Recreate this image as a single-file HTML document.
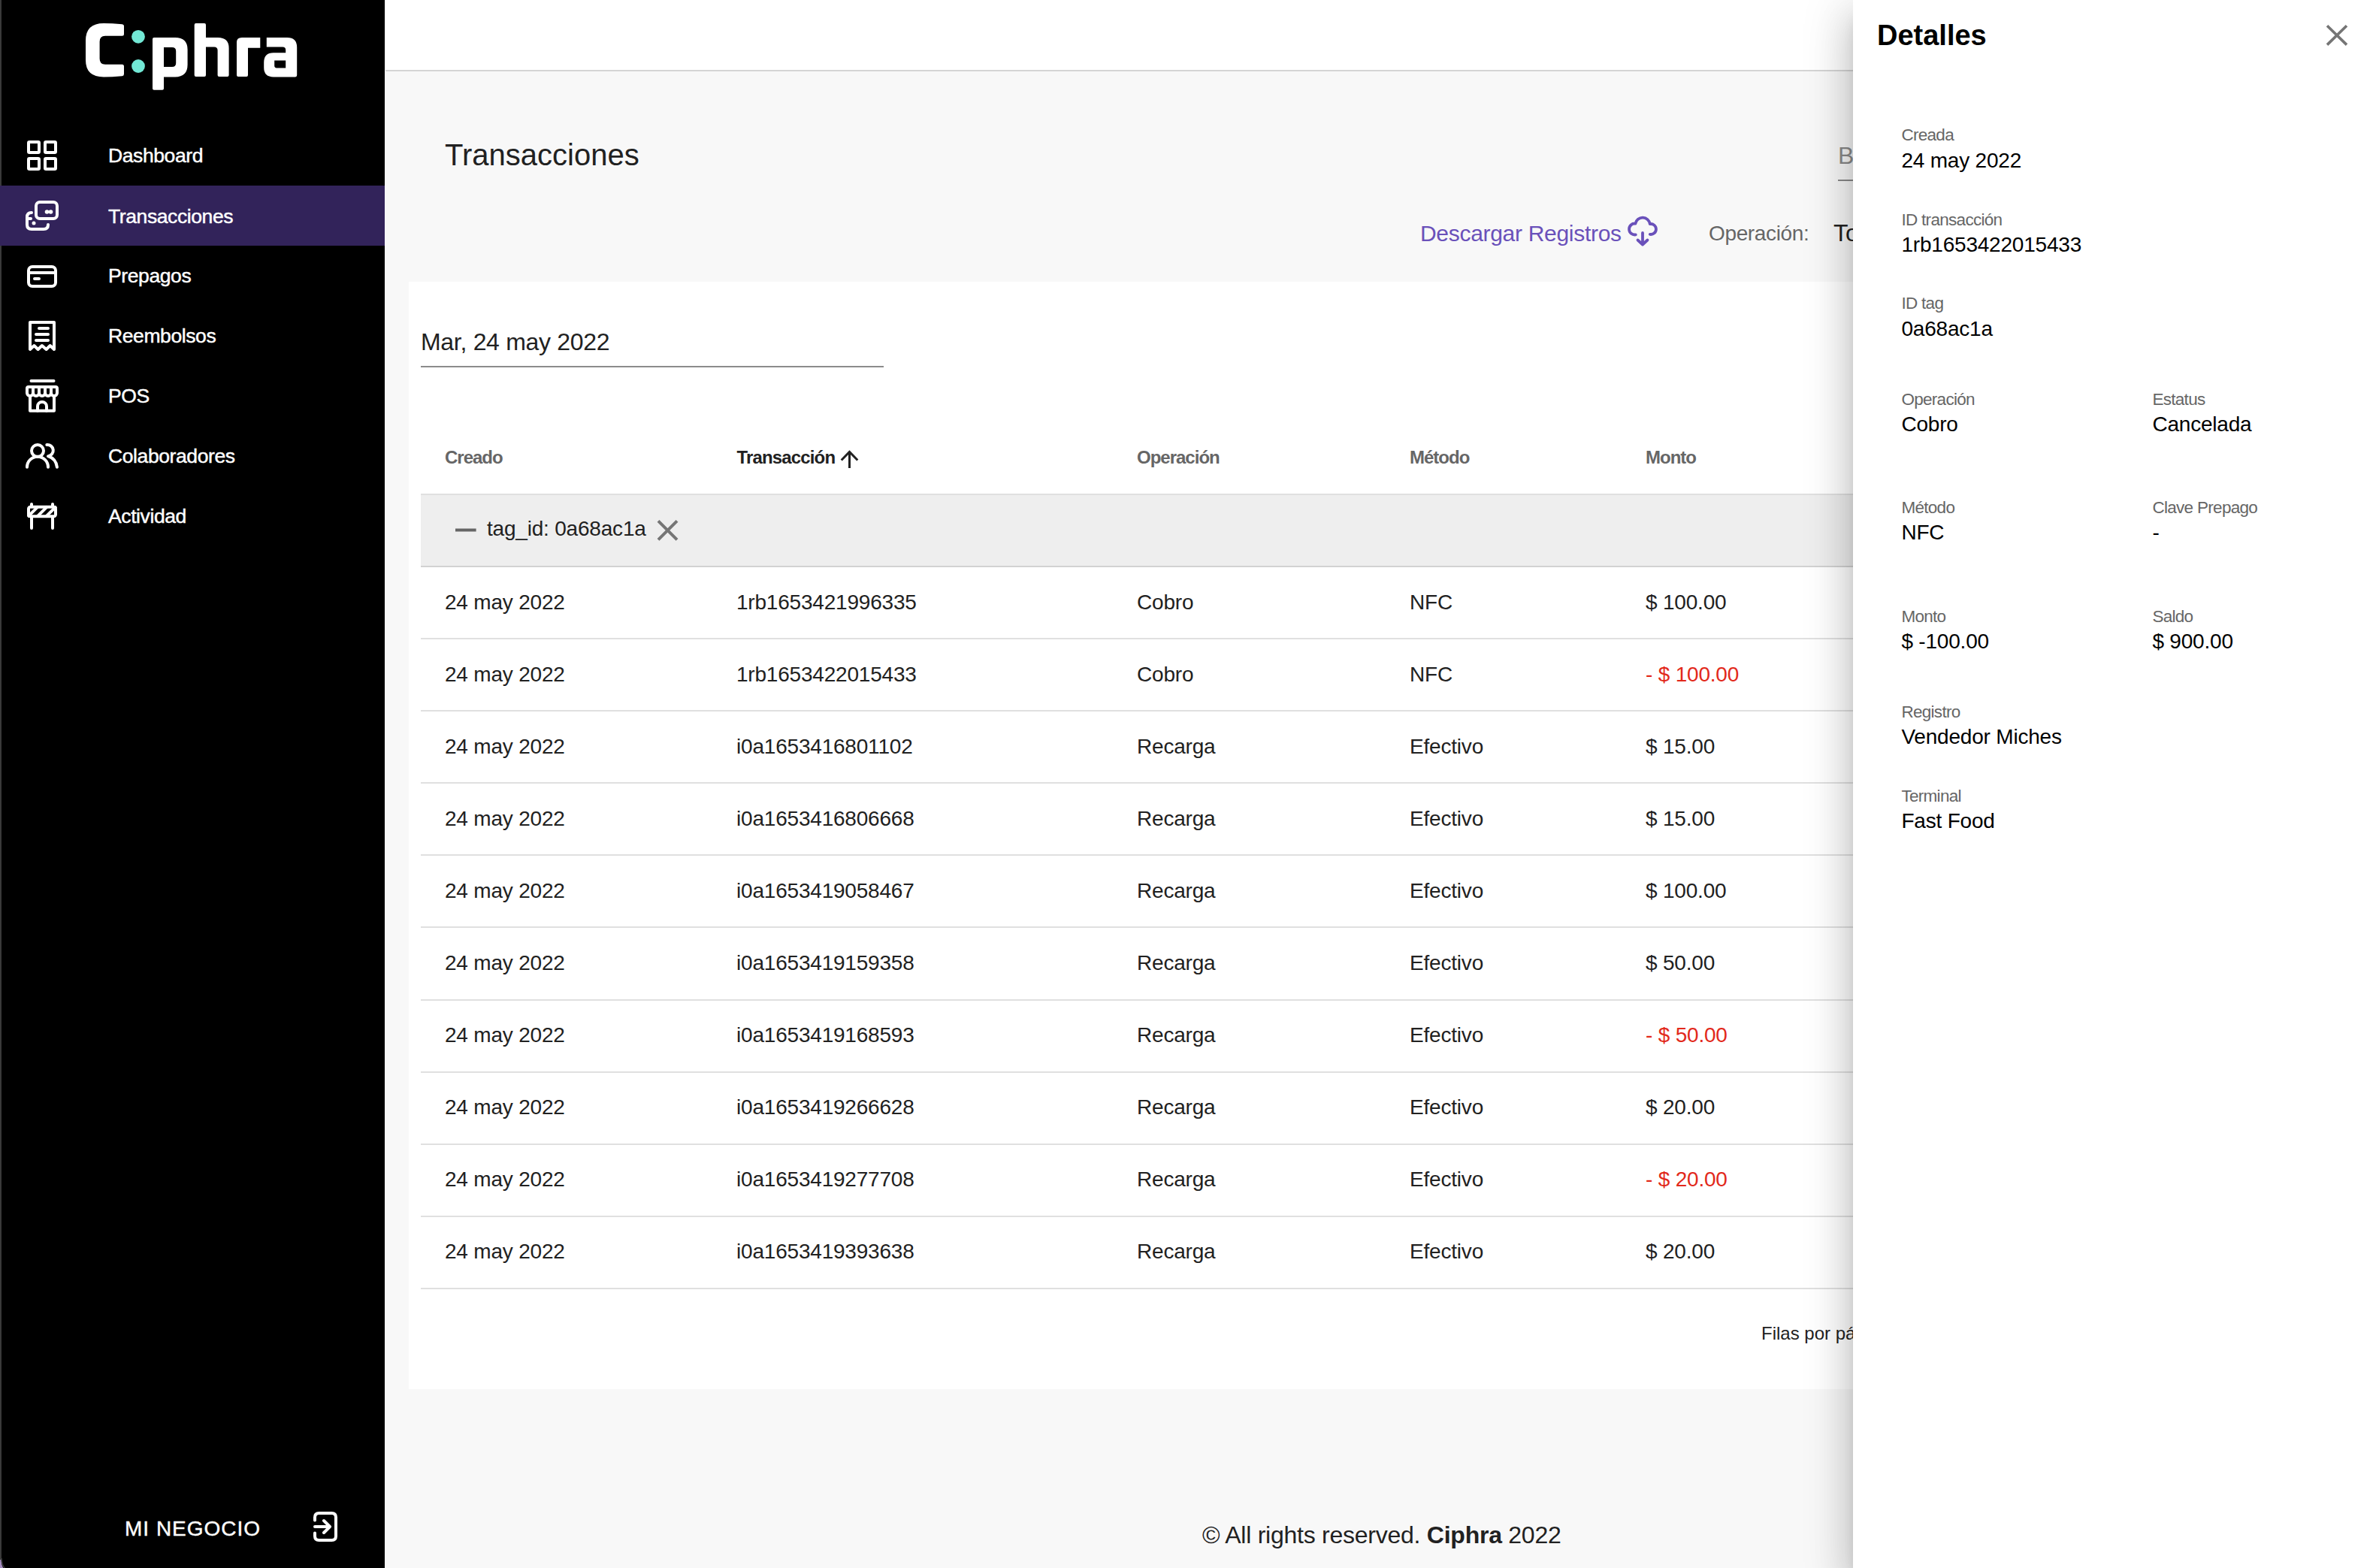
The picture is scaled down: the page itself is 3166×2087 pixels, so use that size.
<!DOCTYPE html>
<html><head><meta charset="utf-8">
<style>
html,body{margin:0;padding:0;}
body{width:3166px;height:2087px;overflow:hidden;position:relative;background:#f8f8f8;font-family:"Liberation Sans",sans-serif;color:#212121;}
.t{position:absolute;white-space:nowrap;line-height:40px;height:40px;}
#side{position:absolute;left:0;top:0;width:512px;height:2087px;background:#000;}
#side .edge{position:absolute;left:0;top:0;width:2px;height:2087px;background:#3a3a3a;}
.nav{position:absolute;left:0;width:512px;height:80px;}
.nav.sel{background:#32235a;}
.nav .lbl{position:absolute;left:144px;top:21px;line-height:40px;color:#fff;font-size:26.5px;letter-spacing:-0.4px;-webkit-text-stroke:0.45px #fff;}
.nav svg{position:absolute;left:0;top:0;}
#hdr{position:absolute;left:512px;top:0;width:2654px;height:93px;background:#fff;border-bottom:2px solid #d5d5d5;}
#card{position:absolute;left:544px;top:375px;width:2590px;height:1474px;background:#fff;}
.hline{position:absolute;left:560px;width:2558px;height:2px;background:#e0e0e0;}
.th{font-size:24px;font-weight:700;color:#666;letter-spacing:-1px;}
.td{font-size:28px;color:#212121;letter-spacing:-0.2px;}
.neg{color:#e2291b;}
#drawer{position:absolute;left:2466px;top:0;width:700px;height:2087px;background:#fff;box-shadow:0 16px 20px -10px rgba(0,0,0,.2),0 32px 48px 4px rgba(0,0,0,.14),0 12px 60px 10px rgba(0,0,0,.12);}
.lab{font-size:22.5px;color:#666;letter-spacing:-0.7px;}
.val{font-size:28px;color:#000;letter-spacing:-0.2px;}
</style></head><body>

<div id="hdr"></div>
<div style="position:absolute;left:512px;top:0;width:1px;height:2087px;background:#fff"></div>
<div id="card"></div>

<div id="side">
  <div class="edge"></div>
<svg style="position:absolute;left:0;top:2067px" width="20" height="20" viewBox="0 0 20 20"><path d="M0,9 L1.5,9 Q2,17 4.5,20 L0,20 Z" fill="#a48cbf"/><path d="M2,7 Q2.5,17 6.5,20" stroke="#3a3a3a" stroke-width="1.5" fill="none"/></svg>

  <div class="nav" style="top:166px"><div class="lbl">Dashboard</div></div>
  <div class="nav sel" style="top:247px"><div class="lbl">Transacciones</div></div>
  <div class="nav" style="top:326px"><div class="lbl">Prepagos</div></div>
  <div class="nav" style="top:406px"><div class="lbl">Reembolsos</div></div>
  <div class="nav" style="top:486px"><div class="lbl">POS</div></div>
  <div class="nav" style="top:566px"><div class="lbl">Colaboradores</div></div>
  <div class="nav" style="top:646px"><div class="lbl">Actividad</div></div>
  <svg style="position:absolute;left:0;top:0" width="512" height="2087" viewBox="0 0 512 2087">
<g fill="#fff" fill-rule="evenodd">
<path d="M162.5,32.2 Q149,31 138,31 Q114,31 114,54 L114,80 Q114,102.4 138,102.4 Q149,102.4 162.5,101.2 Q165,101 165,98.5 L165,88.3 Q165,85.8 162.5,85.8 L140,85.8 Q132.6,85.8 132.6,78 L132.6,55.5 Q132.6,47.8 140,47.8 L162.5,47.8 Q165,47.8 165,45.3 L165,34.5 Q165,32.4 162.5,32.2 Z"/>
<path d="M203,52 Q203,50 205,50 L233,50 Q249.6,50 249.6,66 L249.6,86 Q249.6,102.4 233,102.4 L218,102.4 L218,117.7 Q218,119.7 216,119.7 L205,119.7 Q203,119.7 203,117.7 Z M218,63 L229,63 Q234.2,63 234.2,68 L234.2,84 Q234.2,89 229,89 L218,89 Z"/>
<path d="M258.7,33 Q258.7,31 260.7,31 L272,31 Q274,31 274,33 L274,50 L290,50 Q304.6,50 304.6,64 L304.6,100 Q304.6,102.1 302.6,102.1 L291.6,102.1 Q289.6,102.1 289.6,100 L289.6,67 Q289.6,62.4 285,62.4 L274,62.4 L274,100 Q274,102.1 272,102.1 L260.7,102.1 Q258.7,102.1 258.7,100 Z"/>
<path d="M315,56 Q315,50 322,50 L346.3,50 L346.3,63.7 L330,63.7 L330,100 Q330,102.1 328,102.1 L317,102.1 Q315,102.1 315,100 Z"/>
<path d="M354.8,50 L382,50 Q395.2,50 395.2,63 L395.2,100 Q395.2,102.4 393,102.4 L364,102.4 Q351.2,102.4 351.2,90 L351.2,83 Q351.2,70.2 364,70.2 L380.2,70.2 L380.2,66.5 Q380.2,62.5 376,62.5 L354.8,62.5 Z M365.2,80.6 L380.2,80.6 L380.2,90.4 L368,90.4 Q365.2,90.4 365.2,87.6 Z"/>
</g>
<circle cx="184" cy="48.8" r="8.9" fill="#72e8d5"/>
<circle cx="184" cy="88" r="8.9" fill="#72e8d5"/>
<defs><clipPath id="bclip"><rect x="36" y="672.8" width="40" height="16.4" rx="3"/></clipPath></defs>
<g fill="none" stroke="#fff" stroke-width="4" stroke-linecap="round" stroke-linejoin="round">
<rect x="38" y="189" width="14" height="14" rx="1.2"/><rect x="60" y="189" width="14" height="14" rx="1.2"/>
<rect x="38" y="211" width="14" height="14" rx="1.2"/><rect x="60" y="211" width="14" height="14" rx="1.2"/>
<rect x="48" y="269" width="28" height="22" rx="5"/>
<path d="M42,283 Q36,283 36,289 L36,299 Q36,305 42,305 L58,305 Q64,305 64,299"/>
<path d="M36,291 L41,291"/>
<rect x="38" y="355" width="36" height="26" rx="5"/>
<path d="M38,363 L74,363 M46,371 L52,371"/>
<path d="M40,465 L40,429 L72,429 L72,465 L66.7,460 L61.6,465 L55.9,460 L50.6,465 L45.4,460 Z"/>
<path d="M52,437 L64,437 M48,445 L64,445 M48,453 L64,453"/>
<path d="M41.5,507 L71.5,507"/>
<path d="M36,523 L36,517 Q36,515 38,515 L74,515 Q76,515 76,517 L76,523 A4,4 0 0 1 68,523 A4,4 0 0 1 60,523 A4,4 0 0 1 52,523 A4,4 0 0 1 44,523 A4,4 0 0 1 36,523 Z"/>
<path d="M44,515 L44,523 M52,515 L52,523 M60,515 L60,523 M68,515 L68,523"/>
<path d="M40,529 L40,546.7 L72,546.7 L72,529"/>
<path d="M50,546.7 L50,541 A6,6 0 0 1 62,541 L62,546.7"/>
<circle cx="50" cy="600" r="8"/>
<path d="M36,621.8 A14,14 0 0 1 64,621.8"/>
<path d="M62.3,592 A7.5,7.5 0 0 1 64,607.2 Q74.5,610.5 75.9,621.8"/>
<path d="M42,671 L42,674 M70,671 L70,674 M42,689 L42,703 M70,689 L70,703"/>
<rect x="38" y="674.8" width="36" height="12.4" rx="2.5"/>
<path d="M51,673.8 L36.6,688.2 M63.3,673.8 L48.9,688.2 M75,673.8 L60.6,688.2" stroke-linecap="butt" clip-path="url(#bclip)"/>
<path d="M419,2023.5 L419,2019.5 Q419,2014 424.5,2014 L441.5,2014 Q447,2014 447,2019.5 L447,2044.5 Q447,2050 441.5,2050 L424.5,2050 Q419,2050 419,2044.5 L419,2040.5"/>
<path d="M419,2032 L439,2032 M431,2024 L439,2032 L431,2040"/>
</g>
<g fill="#fff"><circle cx="62.5" cy="282" r="2.8"/><circle cx="67.5" cy="282" r="2.8"/><circle cx="45" cy="297" r="2.5"/></g>
</svg>
  <div class="t" style="left:166px;top:2015px;font-size:28px;color:#fff;letter-spacing:1px;-webkit-text-stroke:0.4px #fff">MI NEGOCIO</div>
</div>

<!-- main -->
<div class="t" style="left:592px;top:186px;font-size:40px;line-height:40px">Transacciones</div>
<div class="t" style="left:1890px;top:291px;font-size:30px;color:#6a51ba;letter-spacing:-0.3px">Descargar Registros</div>
<div class="t" style="left:2274px;top:291px;font-size:28px;color:#666;letter-spacing:-0.35px">Operación:</div>
<div class="t" style="left:2440px;top:290px;font-size:32px;color:#212121">Todas</div>
<div class="t" style="left:2446px;top:187px;font-size:32px;color:#8a8a8a">Buscar</div>
<div style="position:absolute;left:2446px;top:239px;width:400px;height:2px;background:#8a8a8a"></div>

<div class="t" style="left:560px;top:435px;font-size:32px;letter-spacing:-0.3px">Mar, 24 may 2022</div>
<div style="position:absolute;left:560px;top:487px;width:616px;height:2px;background:#8c8c8c"></div>

<div class="t th" style="left:592px;top:589px">Creado</div>
<div class="t th" style="left:980.5px;top:589px;color:#212121;letter-spacing:-0.85px">Transacción</div>
<div class="t th" style="left:1513px;top:589px">Operación</div>
<div class="t th" style="left:1876px;top:589px">Método</div>
<div class="t th" style="left:2190px;top:589px">Monto</div>

<div style="position:absolute;left:560px;top:657px;width:2558px;height:98px;background:#eeeeee;border-top:2px solid #e0e0e0;border-bottom:2px solid #d2d2d2;box-sizing:border-box"></div>
<div class="t td" style="left:648px;top:684px">tag_id: 0a68ac1a</div>

<div class="t td" style="left:592px;top:782px">24 may 2022</div>
<div class="t td" style="left:980px;top:782px">1rb1653421996335</div>
<div class="t td" style="left:1513px;top:782px">Cobro</div>
<div class="t td" style="left:1876px;top:782px">NFC</div>
<div class="t td" style="left:2190px;top:782px">$ 100.00</div>
<div class="hline" style="top:849px"></div>
<div class="t td" style="left:592px;top:878px">24 may 2022</div>
<div class="t td" style="left:980px;top:878px">1rb1653422015433</div>
<div class="t td" style="left:1513px;top:878px">Cobro</div>
<div class="t td" style="left:1876px;top:878px">NFC</div>
<div class="t td neg" style="left:2190px;top:878px">- $ 100.00</div>
<div class="hline" style="top:945px"></div>
<div class="t td" style="left:592px;top:974px">24 may 2022</div>
<div class="t td" style="left:980px;top:974px">i0a1653416801102</div>
<div class="t td" style="left:1513px;top:974px">Recarga</div>
<div class="t td" style="left:1876px;top:974px">Efectivo</div>
<div class="t td" style="left:2190px;top:974px">$ 15.00</div>
<div class="hline" style="top:1041px"></div>
<div class="t td" style="left:592px;top:1070px">24 may 2022</div>
<div class="t td" style="left:980px;top:1070px">i0a1653416806668</div>
<div class="t td" style="left:1513px;top:1070px">Recarga</div>
<div class="t td" style="left:1876px;top:1070px">Efectivo</div>
<div class="t td" style="left:2190px;top:1070px">$ 15.00</div>
<div class="hline" style="top:1137px"></div>
<div class="t td" style="left:592px;top:1166px">24 may 2022</div>
<div class="t td" style="left:980px;top:1166px">i0a1653419058467</div>
<div class="t td" style="left:1513px;top:1166px">Recarga</div>
<div class="t td" style="left:1876px;top:1166px">Efectivo</div>
<div class="t td" style="left:2190px;top:1166px">$ 100.00</div>
<div class="hline" style="top:1233px"></div>
<div class="t td" style="left:592px;top:1262px">24 may 2022</div>
<div class="t td" style="left:980px;top:1262px">i0a1653419159358</div>
<div class="t td" style="left:1513px;top:1262px">Recarga</div>
<div class="t td" style="left:1876px;top:1262px">Efectivo</div>
<div class="t td" style="left:2190px;top:1262px">$ 50.00</div>
<div class="hline" style="top:1330px"></div>
<div class="t td" style="left:592px;top:1358px">24 may 2022</div>
<div class="t td" style="left:980px;top:1358px">i0a1653419168593</div>
<div class="t td" style="left:1513px;top:1358px">Recarga</div>
<div class="t td" style="left:1876px;top:1358px">Efectivo</div>
<div class="t td neg" style="left:2190px;top:1358px">- $ 50.00</div>
<div class="hline" style="top:1426px"></div>
<div class="t td" style="left:592px;top:1454px">24 may 2022</div>
<div class="t td" style="left:980px;top:1454px">i0a1653419266628</div>
<div class="t td" style="left:1513px;top:1454px">Recarga</div>
<div class="t td" style="left:1876px;top:1454px">Efectivo</div>
<div class="t td" style="left:2190px;top:1454px">$ 20.00</div>
<div class="hline" style="top:1522px"></div>
<div class="t td" style="left:592px;top:1550px">24 may 2022</div>
<div class="t td" style="left:980px;top:1550px">i0a1653419277708</div>
<div class="t td" style="left:1513px;top:1550px">Recarga</div>
<div class="t td" style="left:1876px;top:1550px">Efectivo</div>
<div class="t td neg" style="left:2190px;top:1550px">- $ 20.00</div>
<div class="hline" style="top:1618px"></div>
<div class="t td" style="left:592px;top:1646px">24 may 2022</div>
<div class="t td" style="left:980px;top:1646px">i0a1653419393638</div>
<div class="t td" style="left:1513px;top:1646px">Recarga</div>
<div class="t td" style="left:1876px;top:1646px">Efectivo</div>
<div class="t td" style="left:2190px;top:1646px">$ 20.00</div>
<div class="hline" style="top:1714px"></div>

<div class="t" style="left:2344px;top:1755px;font-size:24px;color:#212121">Filas por página:</div>
<div class="t" style="left:1600px;top:2023px;font-size:32px;color:#212121;letter-spacing:-0.25px">© All rights reserved. <b>Ciphra</b> 2022</div>

<svg style="position:absolute;left:0;top:0;pointer-events:none" width="3166" height="2087" viewBox="0 0 3166 2087">
<g fill="none" stroke="#6a51ba" stroke-width="3.8" stroke-linecap="round" stroke-linejoin="round">
<path d="M2176.8,312.4 A7.5,7.5 0 1 1 2176.4,297.55 A9.8,9.8 0 0 1 2195.7,298.1 A7,7 0 1 1 2195.8,311.9"/>
<path d="M2186,310 L2186,325.5 M2179.5,319.5 L2186,325.5 L2192.5,319.5"/>
</g>
<g fill="none" stroke="#212121" stroke-width="3" stroke-linecap="butt" stroke-linejoin="miter">
<path d="M1130.5,623 L1130.5,602 M1119.7,612.5 L1130.5,601.5 L1141.3,612.5"/>
</g>
<path d="M606,705.5 L633.6,705.5" stroke="#666" stroke-width="4"/>
<path d="M876,693.3 L901,718.3 M901,693.3 L876,718.3" stroke="#757575" stroke-width="4"/>
</svg>
<div id="drawer">
  <div class="t" style="left:32px;top:27px;font-size:38px;font-weight:700;color:#000">Detalles</div>
  <svg style="position:absolute;left:0;top:0" width="700" height="120" viewBox="2466 0 700 120"><path d="M3097,34.2 L3123,59.6 M3123,34.2 L3097,59.6" stroke="#757575" stroke-width="3.6" fill="none"/></svg>
  <div class="t lab" style="left:64.4px;top:160px">Creada</div>
  <div class="t val" style="left:64.4px;top:194px">24 may 2022</div>
  <div class="t lab" style="left:64.4px;top:273px">ID transacción</div>
  <div class="t val" style="left:64.4px;top:306px">1rb1653422015433</div>
  <div class="t lab" style="left:64.4px;top:384px">ID tag</div>
  <div class="t val" style="left:64.4px;top:418px">0a68ac1a</div>
  <div class="t lab" style="left:64.4px;top:512px">Operación</div>
  <div class="t val" style="left:64.4px;top:545px">Cobro</div>
  <div class="t lab" style="left:398.4px;top:512px">Estatus</div>
  <div class="t val" style="left:398.4px;top:545px">Cancelada</div>
  <div class="t lab" style="left:64.4px;top:656px">Método</div>
  <div class="t val" style="left:64.4px;top:689px">NFC</div>
  <div class="t lab" style="left:398.4px;top:656px">Clave Prepago</div>
  <div class="t val" style="left:398.4px;top:689px">-</div>
  <div class="t lab" style="left:64.4px;top:801px">Monto</div>
  <div class="t val" style="left:64.4px;top:834px">$ -100.00</div>
  <div class="t lab" style="left:398.4px;top:801px">Saldo</div>
  <div class="t val" style="left:398.4px;top:834px">$ 900.00</div>
  <div class="t lab" style="left:64.4px;top:928px">Registro</div>
  <div class="t val" style="left:64.4px;top:961px">Vendedor Miches</div>
  <div class="t lab" style="left:64.4px;top:1040px">Terminal</div>
  <div class="t val" style="left:64.4px;top:1073px">Fast Food</div>
</div>

</body></html>
